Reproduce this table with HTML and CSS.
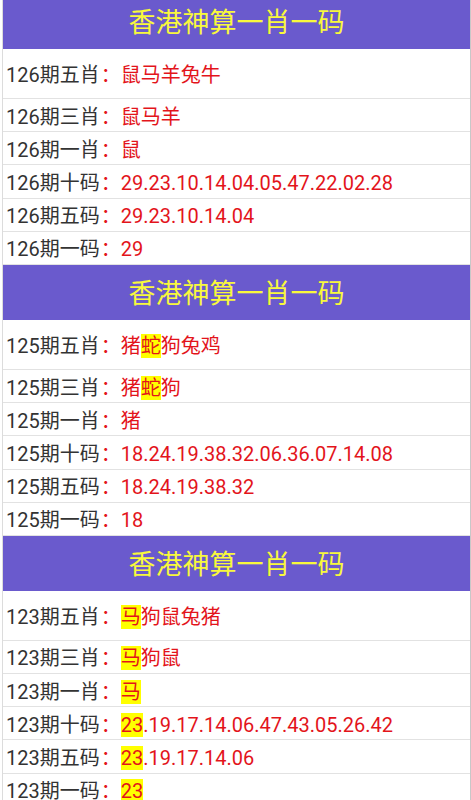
FILE: index.html
```html
<!DOCTYPE html>
<html lang="zh-CN">
<head>
<meta charset="utf-8">
<link rel="stylesheet" href="styles.css">
</head>
<body>
<div class="page">
  <section class="block">
    <div class="title">香港神算一肖一码</div>
    <div class="row first"><span class="label">126期五肖</span><span class="val">：鼠马羊兔牛</span></div>
    <div class="row"><span class="label">126期三肖</span><span class="val">：鼠马羊</span></div>
    <div class="row"><span class="label">126期一肖</span><span class="val">：鼠</span></div>
    <div class="row"><span class="label">126期十码</span><span class="val">：29.23.10.14.04.05.47.22.02.28</span></div>
    <div class="row"><span class="label">126期五码</span><span class="val">：29.23.10.14.04</span></div>
    <div class="row"><span class="label">126期一码</span><span class="val">：29</span></div>
  </section>
  <section class="block">
    <div class="title">香港神算一肖一码</div>
    <div class="row first"><span class="label">125期五肖</span><span class="val">：猪<span class="hit">蛇</span>狗兔鸡</span></div>
    <div class="row"><span class="label">125期三肖</span><span class="val">：猪<span class="hit">蛇</span>狗</span></div>
    <div class="row"><span class="label">125期一肖</span><span class="val">：猪</span></div>
    <div class="row"><span class="label">125期十码</span><span class="val">：18.24.19.38.32.06.36.07.14.08</span></div>
    <div class="row"><span class="label">125期五码</span><span class="val">：18.24.19.38.32</span></div>
    <div class="row"><span class="label">125期一码</span><span class="val">：18</span></div>
  </section>
  <section class="block">
    <div class="title">香港神算一肖一码</div>
    <div class="row first"><span class="label">123期五肖</span><span class="val">：<span class="hit">马</span>狗鼠兔猪</span></div>
    <div class="row"><span class="label">123期三肖</span><span class="val">：<span class="hit">马</span>狗鼠</span></div>
    <div class="row"><span class="label">123期一肖</span><span class="val">：<span class="hit">马</span></span></div>
    <div class="row"><span class="label">123期十码</span><span class="val">：<span class="hit">23</span>.19.17.14.06.47.43.05.26.42</span></div>
    <div class="row"><span class="label">123期五码</span><span class="val">：<span class="hit">23</span>.19.17.14.06</span></div>
    <div class="row"><span class="label">123期一码</span><span class="val">：<span class="hit">23</span></span></div>
  </section>
</div>
</body>
</html>
```

FILE: styles.css
```css
* { box-sizing: border-box; }
html, body { margin: 0; padding: 0; background: #fff; }
body {
  font-family: Roboto, "Noto Sans CJK SC", sans-serif;
  overflow: hidden;
}
.page {
  margin: -6px 0 0 2px;
  width: 469px;
  border-left: 1px solid #dcdcdc;
  border-right: 1px solid #c8c8c8;
}
.title {
  height: 55px;
  background: #6a5acd;
  color: #f8f83c;
  font-size: 27px;
  display: flex;
  align-items: center;
  justify-content: center;
  padding-bottom: 2px;
}
.row {
  height: 33.2px;
  display: flex;
  align-items: center;
  padding-left: 3px;
  font-size: 20px;
  border-bottom: 1px solid #e2e2e2;
  white-space: nowrap;
}
.row.first { height: 50px; }
.label { color: #333; }
.val { color: #e3141b; padding-left: 1px; }
.hit { background: #ffff00; }
```
